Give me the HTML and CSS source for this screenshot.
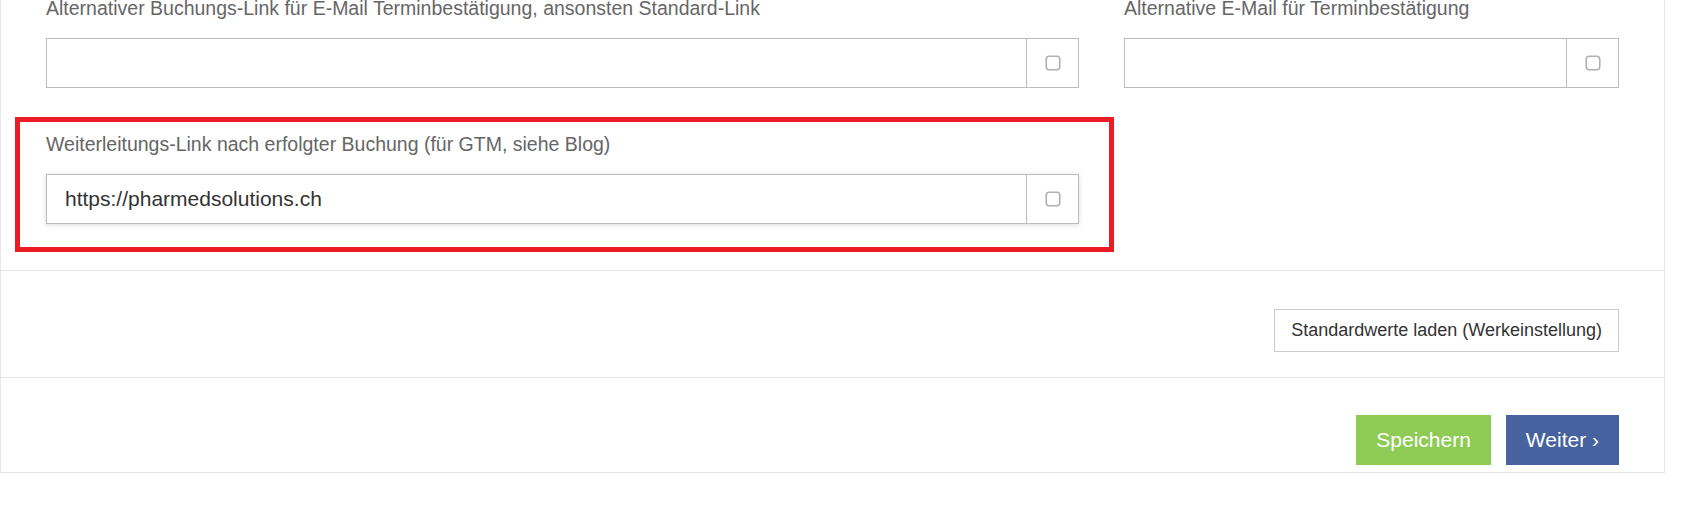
FILE: index.html
```html
<!DOCTYPE html>
<html lang="de">

<head>
    <meta charset="UTF-8">
    <meta name="viewport" content="width=device-width, initial-scale=1.0">
    <title>Buchungseinstellungen</title>
    <link rel="stylesheet" href="styles.css">
</head>

<body>
    <div class="panel">
        <form class="panel-section form-section" id="settingsForm">
            <div class="form-row">
                <div class="field field-wide">
                    <label for="bookingLink">Alternativer Buchungs-Link für E-Mail Terminbestätigung, ansonsten Standard-Link</label>
                    <div class="input-group">
                        <input class="input-field" type="text" id="bookingLink" name="bookingLink">
                        <span class="input-addon">
                            <svg class="check-icon" width="16" height="16" viewBox="0 0 16 16"><rect x="1.25" y="1.25" width="13.5" height="13.5" rx="3" fill="none" stroke="#b0b0b0" stroke-width="1.6"/></svg>
                        </span>
                    </div>
                </div>
                <div class="field field-narrow">
                    <label for="confirmMail">Alternative E-Mail für Terminbestätigung</label>
                    <div class="input-group">
                        <input class="input-field" type="text" id="confirmMail" name="confirmMail">
                        <span class="input-addon">
                            <svg class="check-icon" width="16" height="16" viewBox="0 0 16 16"><rect x="1.25" y="1.25" width="13.5" height="13.5" rx="3" fill="none" stroke="#b0b0b0" stroke-width="1.6"/></svg>
                        </span>
                    </div>
                </div>
            </div>
            <div class="form-row">
                <div class="field field-wide highlight">
                    <label for="redirectLink">Weiterleitungs-Link nach erfolgter Buchung (für GTM, siehe Blog)</label>
                    <div class="input-group focused">
                        <input class="input-field" type="text" id="redirectLink" name="redirectLink" value="https://pharmedsolutions.ch">
                        <span class="input-addon">
                            <svg class="check-icon" width="16" height="16" viewBox="0 0 16 16"><rect x="1.25" y="1.25" width="13.5" height="13.5" rx="3" fill="none" stroke="#b0b0b0" stroke-width="1.6"/></svg>
                        </span>
                    </div>
                </div>
            </div>
        </form>

        <div class="panel-section defaults-section">
            <button class="btn btn-default" type="button">Standardwerte laden (Werkeinstellung)</button>
        </div>

        <div class="panel-section actions-section">
            <button class="btn btn-save" type="submit" form="settingsForm">Speichern</button>
            <button class="btn btn-next" type="button">Weiter <span class="chevron">&rsaquo;</span></button>
        </div>
    </div>
</body>

</html>
```

FILE: styles.css
```css
body {
    margin: 0;
    background: #fff;
    font-family: "Liberation Sans", Arial, sans-serif;
    color: #333;
}

.panel {
    width: 1665px;
    box-sizing: border-box;
    margin-top: -21px;
    border: 1px solid #e6e6e6;
    background: #fff;
}

.panel-section {
    border-top: 1px solid #e6e6e6;
}

.panel-section:first-child {
    border-top: none;
}

/* form area */
.form-section {
    padding: 14px 45px 18px 45px;
}

.form-row {
    display: flex;
    gap: 45px;
}

.form-row + .form-row {
    margin-top: 29px;
}

.field-wide {
    width: 1033px;
}

.field-narrow {
    width: 495px;
}

label {
    display: block;
    font-size: 19.5px;
    line-height: 28px;
    color: #666;
    margin-bottom: 16px;
    white-space: nowrap;
}

.input-group {
    display: flex;
    height: 50px;
    box-sizing: border-box;
    border: 1px solid #bcbcbc;
    background: #fff;
}

.input-group.focused {
    box-shadow: 0 1px 5px rgba(0, 0, 0, 0.14);
}

.input-field {
    flex: 1;
    min-width: 0;
    border: none;
    outline: none;
    padding: 0 18px;
    font-family: "Liberation Sans", Arial, sans-serif;
    font-size: 21px;
    color: #333;
    background: transparent;
}

.input-addon {
    width: 51px;
    border-left: 1px solid #bcbcbc;
    display: flex;
    align-items: center;
    justify-content: center;
}

/* red marker round the redirect field */
.highlight {
    border: 5px solid #ed1c24;
    margin: 0 -35px 0 -31px;
    padding: 8px 30px 23px 26px;
}

/* buttons */
.defaults-section,
.actions-section {
    display: flex;
    justify-content: flex-end;
    padding-right: 45px;
}

.defaults-section {
    padding-top: 38px;
    padding-bottom: 25px;
}

.actions-section {
    padding-top: 37px;
    padding-bottom: 7px;
    gap: 15px;
}

.btn {
    font-family: "Liberation Sans", Arial, sans-serif;
    cursor: pointer;
    border-radius: 0;
}

.btn-default {
    height: 43px;
    padding: 0 16px;
    font-size: 18px;
    color: #333;
    background: #fff;
    border: 1px solid #ccc;
}

.btn-save,
.btn-next {
    height: 50px;
    padding: 0 20px;
    font-size: 21px;
    color: #fff;
    border: none;
}

.btn-save {
    background-color: #8dcb55;
}

.btn-next {
    background-color: #46639f;
}
```
